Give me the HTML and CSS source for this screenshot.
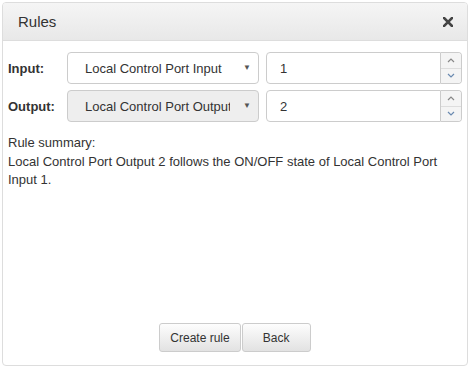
FILE: index.html
```
<!DOCTYPE html>
<html lang="en">
<head>
  <meta charset="UTF-8" />
  <meta name="viewport" content="width=device-width, initial-scale=1.0"/>
  <title>Rules</title>
  <link rel="stylesheet" href="styles.css">
</head>
<body>
  <div class="panel">
    <div class="header">
      <span class="title">Rules</span>
      <button class="close" title="Close">
        <svg width="10" height="10" viewBox="0 0 10 10">
          <path d="M1 1 L9 9 M9 1 L1 9" stroke="#444" stroke-width="2.6" stroke-linecap="square"/>
        </svg>
      </button>
    </div>

    <div class="content">
      <div class="row">
        <label for="inSel">Input:</label>
        <div class="select-wrap">
          <select id="inSel">
            <option selected>Local Control Port Input</option>
          </select>
        </div>
        <div class="spin">
          <input type="text" id="inNum" value="1" />
          <div class="spin-btns">
            <button class="spin-up">
              <svg width="8" height="5" viewBox="0 0 8 5"><path d="M1 4 L4 1 L7 4" fill="none" stroke="#888" stroke-width="1.2"/></svg>
            </button>
            <button class="spin-down">
              <svg width="8" height="5" viewBox="0 0 8 5"><path d="M1 1 L4 4 L7 1" fill="none" stroke="#6a8ab0" stroke-width="1.2"/></svg>
            </button>
          </div>
        </div>
      </div>

      <div class="row">
        <label for="outSel">Output:</label>
        <div class="select-wrap">
          <select id="outSel" disabled>
            <option selected>Local Control Port Output</option>
          </select>
        </div>
        <div class="spin">
          <input type="text" id="outNum" value="2" />
          <div class="spin-btns">
            <button class="spin-up">
              <svg width="8" height="5" viewBox="0 0 8 5"><path d="M1 4 L4 1 L7 4" fill="none" stroke="#888" stroke-width="1.2"/></svg>
            </button>
            <button class="spin-down">
              <svg width="8" height="5" viewBox="0 0 8 5"><path d="M1 1 L4 4 L7 1" fill="none" stroke="#6a8ab0" stroke-width="1.2"/></svg>
            </button>
          </div>
        </div>
      </div>

      <div class="summary">
        Rule summary:<br>
        Local Control Port Output 2 follows the ON/OFF state of Local Control Port Input 1.
      </div>
    </div>

    <div class="footer">
      <button class="btn">Create rule</button>
      <button class="btn">Back</button>
    </div>
  </div>
</body>
</html>
```

FILE: styles.css
```
body {
  margin: 0;
  font-family: "Liberation Sans", Arial, sans-serif;
  font-size: 13px;
  color: #333;
  background: #fff;
}
.panel {
  margin: 2px;
  height: 362px;
  border: 1px solid #ddd;
  border-radius: 4px;
  display: flex;
  flex-direction: column;
  overflow: hidden;
}
.header {
  height: 37px;
  flex-shrink: 0;
  border-bottom: 1px solid #ddd;
  background: linear-gradient(#f5f5f5, #e8e8e8);
  display: flex;
  align-items: center;
  justify-content: space-between;
  padding: 0 14px 0 15px;
}
.title {
  font-size: 15px;
  color: #333;
}
.close {
  border: none;
  background: none;
  padding: 0;
  display: flex;
  cursor: pointer;
}
.content {
  padding: 11px 5px 0 5px;
}
.row {
  display: flex;
  align-items: center;
  margin-bottom: 6px;
}
label {
  flex: 0 0 59px;
  font-weight: bold;
}
.select-wrap {
  position: relative;
  flex: 0 0 192px;
  margin-right: 7px;
}
.select-wrap::after {
  content: "\25BC";
  position: absolute;
  right: 8px;
  top: 11px;
  font-size: 8px;
  color: #555;
  pointer-events: none;
}
select {
  appearance: none;
  -webkit-appearance: none;
  display: block;
  width: 100%;
  height: 32px;
  padding: 0 28px 0 17px;
  border: 1px solid #ccc;
  border-radius: 4px;
  background: #fff;
  font-family: inherit;
  font-size: 13px;
  color: #333;
  opacity: 1;
}
select:disabled {
  background: #eee;
  color: #333;
}
.spin {
  flex: 1 1 0;
  min-width: 0;
  display: flex;
  height: 32px;
}
.spin input {
  flex: 1 1 0;
  min-width: 0;
  width: 0;
  height: 32px;
  box-sizing: border-box;
  border: 1px solid #ccc;
  border-radius: 4px 0 0 4px;
  padding: 0 13px;
  font-family: inherit;
  font-size: 13px;
  color: #333;
}
.spin-btns {
  flex: 0 0 21px;
  display: flex;
  flex-direction: column;
  border: 1px solid #ccc;
  border-left: none;
  border-radius: 0 4px 4px 0;
  overflow: hidden;
  box-sizing: border-box;
}
.spin-btns button {
  flex: 1;
  border: none;
  background: #f4f4f4;
  padding: 0;
  display: flex;
  align-items: center;
  justify-content: center;
  cursor: pointer;
}
.spin-btns .spin-up {
  border-bottom: 1px solid #ddd;
}
.summary {
  margin-top: 12px;
  line-height: 18.57px;
}
.footer {
  margin-top: auto;
  display: flex;
  justify-content: center;
  gap: 1px;
  padding-bottom: 13px;
}
.btn {
  height: 29px;
  min-width: 69px;
  padding: 0 10px;
  border: 1px solid #ccc;
  border-radius: 3px;
  background: linear-gradient(#fdfdfd, #e2e2e2);
  font-family: inherit;
  font-size: 12px;
  color: #333;
  cursor: pointer;
}
```
